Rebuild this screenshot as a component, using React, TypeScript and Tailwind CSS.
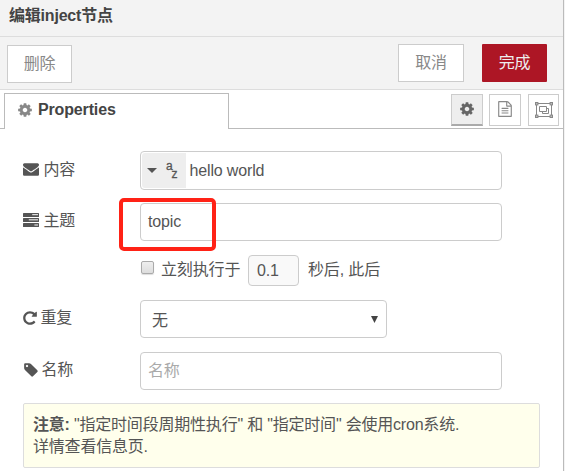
import React from "react";

const font =
  "font-['Liberation_Sans','Noto_Sans_CJK_SC',sans-serif] text-[16px] leading-[22px] tracking-[-0.15px]";

function Glyph({ d, className }: { d: string; className: string }) {
  return (
    <svg viewBox="0 0 1792 1792" className={className} fill="currentColor">
      <path d={d} />
    </svg>
  );
}

const cog =
  "M1152 896q0-106-75-181t-181-75-181 75-75 181 75 181 181 75 181-75 75-181zm512-109v222q0 12-8 23t-20 13l-185 28q-19 54-39 91 35 50 107 138 10 12 10 25t-9 23q-27 37-99 108t-94 71q-12 0-26-9l-138-108q-44 23-91 38-16 136-29 186-7 28-36 28h-222q-14 0-24.5-8.5t-11.5-21.5l-28-184q-49-16-90-37l-141 107q-10 9-25 9-14 0-25-11-126-114-165-168-7-10-7-23 0-12 8-23 15-21 51-66.5t54-70.5q-27-50-41-99l-183-27q-13-2-21-12.5t-8-23.5v-222q0-12 8-23t19-13l186-28q14-46 39-92-40-57-107-138-10-12-10-24 0-10 9-23 26-36 98.5-107.5t94.5-71.5q13 0 26 10l138 107q44-23 91-38 16-136 29-186 7-28 36-28h222q14 0 24.5 8.5t11.5 21.5l28 184q49 16 90 37l142-107q9-9 24-9 13 0 25 10 129 119 165 170 7 8 7 22 0 12-8 23-15 21-51 66.5t-54 70.5q26 50 41 98l183 28q13 2 21 12.5t8 23.5z";
const envelope =
  "M1792 710v794q0 66-47 113t-113 47h-1472q-66 0-113-47t-47-113v-794q44 49 101 87 362 246 497 345 57 42 92.5 65.5t94.5 48 110 24.5h2q51 0 110-24.5t94.5-48 92.5-65.5q170-123 498-345 57-39 100-87zm0-294q0 79-49 151t-122 123q-376 261-468 325-10 7-42.5 31t-54 38.5-52 32.5-57.5 27-50 9h-2q-23 0-50-9t-57.5-27-52-32.5-54-38.5-42.5-31q-91-64-262-182.5t-205-142.5q-62-42-117-115.5t-55-136.5q0-78 41.5-130t118.5-52h1472q65 0 112.5 47t47.5 113z";
const fileText =
  "M1596 380q28 28 48 76t20 88v1152q0 40-28 68t-68 28h-1344q-40 0-68-28t-28-68v-1600q0-40 28-68t68-28h896q40 0 88 20t76 48zm-444-244v376h376q-10-29-22-41l-313-313q-12-12-41-22zm384 1528v-1024h-416q-40 0-68-28t-28-68v-416h-768v1536h1280zm-1024-864q0-14 9-23t23-9h704q14 0 23 9t9 23v64q0 14-9 23t-23 9h-704q-14 0-23-9t-9-23v-64zm736 224q14 0 23 9t9 23v64q0 14-9 23t-23 9h-704q-14 0-23-9t-9-23v-64q0-14 9-23t23-9h704zm0 256q14 0 23 9t9 23v64q0 14-9 23t-23 9h-704q-14 0-23-9t-9-23v-64q0-14 9-23t23-9h704z";
const repeat =
  "M1664 256v448q0 26-19 45t-45 19h-448q-42 0-59-40-17-39 14-69l138-138q-148-137-349-137-104 0-198.5 40.5t-163.5 109.5-109.5 163.5-40.5 198.5 40.5 198.5 109.5 163.5 163.5 109.5 198.5 40.5q119 0 225-52t179-147q7-10 23-12 15 0 25 9l137 138q9 8 9.5 20.5t-7.5 22.5q-109 132-264 204.5t-327 72.5q-156 0-298-61t-245-164-164-245-61-298 61-298 164-245 245-164 298-61q147 0 284.5 55.5t244.5 156.5l130-129q29-31 70-14 39 17 39 59z";
const tag =
  "M576 448q0-53-37.5-90.5t-90.5-37.5-90.5 37.5-37.5 90.5 37.5 90.5 90.5 37.5 90.5-37.5 37.5-90.5zm1067 576q0 53-37 90l-491 492q-39 37-91 37-53 0-90-37l-715-716q-38-37-64.5-101t-26.5-117v-416q0-52 38-90t90-38h416q53 0 117 26.5t102 64.5l715 714q37 39 37 91z";

function TasksIcon() {
  return (
    <svg viewBox="0 0 16 16" className="mb-[3px] h-4 w-4" fill="none">
      <g fill="#555">
        <rect x="0" y="1" width="16" height="4" rx=".5" />
        <rect x="0" y="6" width="16" height="4" rx=".5" />
        <rect x="0" y="11" width="16" height="4" rx=".5" />
      </g>
      <g fill="#fff" fillOpacity=".8">
        <rect x="9.2" y="2" width="5.8" height="1.2" />
        <rect x="5.8" y="7.2" width="9.2" height="1.2" />
        <rect x="11.4" y="12.4" width="3.6" height="1.2" />
      </g>
    </svg>
  );
}

function GroupIcon() {
  return (
    <svg viewBox="0 0 18 16" className="h-4 w-[18px] shrink-0" fill="none" stroke="#888">
      <path d="M3 1.5h12M3 14.5h12M1.5 3v10M16.5 3v10" />
      <g fill="#bbb">
        <rect x=".5" y=".5" width="2.4" height="2.4" />
        <rect x="15.1" y=".5" width="2.4" height="2.4" />
        <rect x=".5" y="13.1" width="2.4" height="2.4" />
        <rect x="15.1" y="13.1" width="2.4" height="2.4" />
      </g>
      <path d="M4.5 4.5h7v5h-7zM11.5 6.5h2v5h-6v-2" />
    </svg>
  );
}

function Row({
  icon,
  label,
  className,
  children,
}: {
  icon: React.ReactNode;
  label: string;
  className: string;
  children: React.ReactNode;
}) {
  return (
    <div className={`flex items-center ${className}`}>
      <div className="flex w-[117px] items-center gap-[5px] pb-[2px]">
        {icon}
        <span className="-ml-[0.5px]">{label}</span>
      </div>
      {children}
    </div>
  );
}

export default function App() {
  return (
    <div className={`${font} flex h-[471px] w-[565px] overflow-hidden bg-white text-[#555]`}>
      <div className="relative flex w-[564px] flex-col border-r border-[#bbb]">
        <header className="h-[37px] border-b border-[#ddd] bg-[#f3f3f3] pt-[5px] pl-[9px] font-bold tracking-[-0.2px] text-[#444]">
          编辑inject节点
        </header>
        <div className="flex h-[53px] border-b border-[#ddd] bg-[#f3f3f3] pt-[7px] pl-[7px] text-[#888]">
          <button className="mt-px h-[38px] w-[65px] border border-[#ccc] bg-white pb-px">删除</button>
          <button className="ml-[326px] h-[38px] w-[66px] border border-[#ccc] bg-white pb-px">取消</button>
          <button className="ml-[18px] h-[38px] w-[65px] rounded-[1px] bg-[#ad1625] pb-px text-[#eee]">完成</button>
        </div>
        <div className="flex h-[39px] pt-[3px]">
          <div className="w-1 border-b border-[#bbb]" />
          <div className="flex w-[225px] items-center gap-[6px] border-x border-t border-[#bbb] pb-[3px] pl-[13px] font-bold text-[#444]">
            <Glyph d={cog} className="-ml-px mb-px h-4 w-4 text-[#888]" />
            <span className="-ml-px">Properties</span>
          </div>
          <div className="flex flex-1 border-b border-[#bbb] pt-px pl-[222px]">
            <div className="flex h-8 w-8 items-center justify-center border border-b-2 border-[#ccc] border-b-[#aaa] bg-[#eee]">
              <Glyph d={cog} className="mb-px h-4 w-4 text-[#666]" />
            </div>
            <div className="ml-[6px] flex h-8 w-8 items-center justify-center border border-[#ccc]">
              <Glyph d={fileText} className="mb-[2px] h-4 w-4 text-[#888]" />
            </div>
            <div className="ml-[7px] flex h-8 w-[31px] items-center justify-center border border-[#ccc]">
              <GroupIcon />
            </div>
          </div>
        </div>

        <form className="flex flex-col pt-[22px] pl-[23px]">
          <Row icon={<Glyph d={envelope} className="mb-px h-4 w-4" />} label="内容" className="h-[39px]">
            <div className="flex h-[39px] w-[362px] items-center rounded-[4px] border border-[#ccc] p-px">
              <div className="flex h-full w-[44px] items-center rounded-l-[3px] bg-[#eee]">
                <svg viewBox="0 0 10 5" className="ml-[5px] h-[5px] w-[10px]">
                  <path d="M0 0h10L5 5z" fill="#555" />
                </svg>
                <div className="ml-[9px] flex h-5 text-[12px] leading-[12px] [-webkit-text-stroke:0.3px_#555]">
                  <span className="-mt-px w-[5.5px]">a</span>
                  <span className="mt-[7px]">z</span>
                </div>
              </div>
              <span className="ml-[3.5px]">hello world</span>
            </div>
          </Row>
          <Row icon={<TasksIcon />} label="主题" className="mt-[13px] h-[38px]">
            <div className="flex h-[38px] w-[362px] items-center rounded-[4px] border border-[#ccc] pb-px pl-[7px]">topic</div>
          </Row>
          <div className="mt-[14px] ml-[118px] flex h-[31px] items-center">
            <span className="mb-[6px] h-[13px] w-[13px] rounded-[2px] border border-[#aaa] bg-linear-to-b from-[#eee] to-[#ddd] shadow-[0_1px_1px_#ddd]" />
            <span className="mb-[2px] ml-[7px] w-[87px]">立刻执行于</span>
            <span className="flex h-[31px] w-[51px] items-center rounded-[4px] border border-[#ccc] bg-[#f9f9f9] pl-2">0.1</span>
            <span className="mb-[2px] ml-[9px]">秒后, 此后</span>
          </div>
          <Row icon={<Glyph d={repeat} className="-mr-[2px] -ml-px mb-px h-4 w-4" />} label="重复" className="mt-[14px] h-[38px]">
            <div className="flex h-[38px] w-[247px] items-center justify-between rounded-[4px] border border-[#ccc] pr-[8px] pl-[11px]">
              <span className="pt-[3px]">无</span>
              <svg viewBox="0 0 7 7" className="h-[7px] w-[7px]">
                <path d="M0 0h7L3.5 7z" fill="#444" />
              </svg>
            </div>
          </Row>
          <Row icon={<Glyph d={tag} className="-mr-[2px] mb-px h-4 w-4" />} label="名称" className="mt-[14px] h-[38px]">
            <div className="flex h-[38px] w-[362px] items-center rounded-[4px] border border-[#ccc] pl-[7px] text-[#aaa]">名称</div>
          </Row>
          <div className="mt-[13px] h-[65px] w-[517px] rounded-[2px] border border-[#ddd] bg-[#ffffec] pt-[10px] pl-[9px] tracking-[-0.2px] whitespace-nowrap">
            <div><b>注意:</b> "指定时间段周期性执行" 和 "指定时间" 会使用cron系统.</div>
            <div>详情查看信息页.</div>
          </div>
        </form>

        <div className="absolute top-[198px] left-[119px] h-[53px] w-[97px] rounded-[5px] border-4 border-[#ff2216]" />
      </div>
      <div className="w-px bg-[#f3f3f3]" />
    </div>
  );
}
